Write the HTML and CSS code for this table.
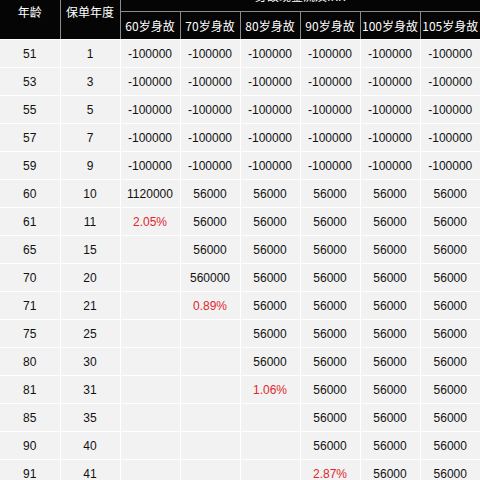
FILE: index.html
```html
<!DOCTYPE html>
<html lang="zh">
<head>
<meta charset="utf-8">
<link rel="stylesheet" href="styles.css">
</head>
<body>
<div class="frame">
<table class="irr">
  <colgroup>
    <col><col><col><col><col><col><col><col>
  </colgroup>
  <thead>
    <tr>
      <th rowspan="2" class="rs">年龄</th>
      <th rowspan="2" class="rs">保单年度</th>
      <th colspan="6" class="top">身故现金流及IRR</th>
    </tr>
    <tr>
      <th>60岁身故</th><th>70岁身故</th><th>80岁身故</th><th>90岁身故</th><th>100岁身故</th><th>105岁身故</th>
    </tr>
  </thead>
  <tbody>
    <tr><td>51</td><td>1</td><td>-100000</td><td>-100000</td><td>-100000</td><td>-100000</td><td>-100000</td><td>-100000</td></tr>
    <tr><td>53</td><td>3</td><td>-100000</td><td>-100000</td><td>-100000</td><td>-100000</td><td>-100000</td><td>-100000</td></tr>
    <tr><td>55</td><td>5</td><td>-100000</td><td>-100000</td><td>-100000</td><td>-100000</td><td>-100000</td><td>-100000</td></tr>
    <tr><td>57</td><td>7</td><td>-100000</td><td>-100000</td><td>-100000</td><td>-100000</td><td>-100000</td><td>-100000</td></tr>
    <tr><td>59</td><td>9</td><td>-100000</td><td>-100000</td><td>-100000</td><td>-100000</td><td>-100000</td><td>-100000</td></tr>
    <tr><td>60</td><td>10</td><td>1120000</td><td>56000</td><td>56000</td><td>56000</td><td>56000</td><td>56000</td></tr>
    <tr><td>61</td><td>11</td><td class="red">2.05%</td><td>56000</td><td>56000</td><td>56000</td><td>56000</td><td>56000</td></tr>
    <tr><td>65</td><td>15</td><td></td><td>56000</td><td>56000</td><td>56000</td><td>56000</td><td>56000</td></tr>
    <tr><td>70</td><td>20</td><td></td><td>560000</td><td>56000</td><td>56000</td><td>56000</td><td>56000</td></tr>
    <tr><td>71</td><td>21</td><td></td><td class="red">0.89%</td><td>56000</td><td>56000</td><td>56000</td><td>56000</td></tr>
    <tr><td>75</td><td>25</td><td></td><td></td><td>56000</td><td>56000</td><td>56000</td><td>56000</td></tr>
    <tr><td>80</td><td>30</td><td></td><td></td><td>56000</td><td>56000</td><td>56000</td><td>56000</td></tr>
    <tr><td>81</td><td>31</td><td></td><td></td><td class="red">1.06%</td><td>56000</td><td>56000</td><td>56000</td></tr>
    <tr><td>85</td><td>35</td><td></td><td></td><td></td><td>56000</td><td>56000</td><td>56000</td></tr>
    <tr><td>90</td><td>40</td><td></td><td></td><td></td><td>56000</td><td>56000</td><td>56000</td></tr>
    <tr><td>91</td><td>41</td><td></td><td></td><td></td><td class="red">2.87%</td><td>56000</td><td>56000</td></tr>
  </tbody>
</table>
</div>
</body>
</html>
```

FILE: styles.css
```css
html, body {
  margin: 0;
  padding: 0;
  background: #ffffff;
}
.frame {
  width: 480px;
  height: 480px;
  overflow: hidden;
}
.irr {
  width: 480px;
  margin-top: -16px;
  table-layout: fixed;
  border-collapse: collapse;
  font-family: "Liberation Sans", "Noto Sans CJK SC", sans-serif;
  font-size: 12px;
  color: #111111;
}
.irr col {
  width: 60px;
}
.irr th {
  background: #050505;
  color: #ffffff;
  font-weight: normal;
  height: 27px;
  padding: 0;
  text-align: center;
  border: 1px solid #8c8c8c;
  border-top: none;
  white-space: nowrap;
  font-family: "Noto Sans CJK SC", "Liberation Sans", sans-serif;
  font-size: 12px;
}
.irr th.top {
  padding-bottom: 4px;
  height: 23px;
}
.irr thead tr:last-child th {
  border-bottom: 1px solid #ffffff;
}
.irr th:first-child {
  border-left: none;
}
.irr th:last-child {
  border-right: none;
}
.irr th.rs {
  border-bottom: 1px solid #ffffff;
}
.irr td {
  background: #f2f2f2;
  height: 27px;
  padding: 0;
  text-align: center;
  border: 1px solid #ffffff;
  white-space: nowrap;
}
.irr td:first-child {
  border-left: none;
}
.irr td:last-child {
  border-right: none;
}
.irr td.red {
  color: #e0262c;
}
```
